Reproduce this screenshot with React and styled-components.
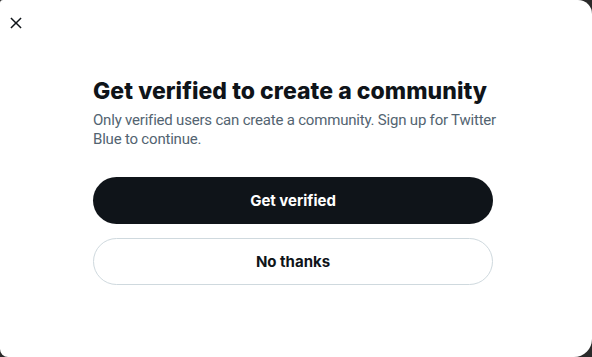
import React from "react";
import styled, { createGlobalStyle } from "styled-components";

const Global = createGlobalStyle`
  html, body { margin: 0; padding: 0; background: #2a2a2a; }
  body { width: 592px; height: 357px; overflow: hidden; font-family: Inter, "Noto Sans", sans-serif; }
`;

const Modal = styled.div`
  box-sizing: border-box;
  width: 592px;
  height: 357px;
  background: #ffffff;
  border-radius: 3px 14px 18px 8px;
  display: flex;
  flex-direction: column;
`;

const TopBar = styled.div`
  height: 46px;
  display: flex;
  align-items: center;
  padding-left: 6px;
`;

const CloseButton = styled.button`
  width: 20px;
  height: 20px;
  padding: 0;
  border: none;
  background: transparent;
  display: flex;
  align-items: center;
  justify-content: center;
  color: #0f1419;
  cursor: pointer;
`;

const Body = styled.div`
  padding: 31px 0 0 93px;
  width: 400px;
  display: flex;
  flex-direction: column;
`;

const Title = styled.h1`
  margin: 0;
  font-size: 23px;
  line-height: 28px;
  font-weight: 800;
  color: #0f1419;
  letter-spacing: 0.05px;
  white-space: nowrap;
`;

const Sub = styled.p`
  margin: 6px 0 0;
  font-family: Roboto, "Noto Sans", sans-serif;
  font-size: 15px;
  line-height: 19px;
  letter-spacing: -0.2px;
  color: #536471;
  width: 420px;
`;

const Buttons = styled.div`
  display: flex;
  flex-direction: column;
  gap: 14px;
  margin-top: 28px;
`;

const Btn = styled.button`
  box-sizing: border-box;
  width: 400px;
  height: 47px;
  border-radius: 9999px;
  font-family: inherit;
  font-size: 15px;
  font-weight: 700;
  cursor: pointer;
  background: ${(p) => (p.$primary ? "#0f1419" : "#ffffff")};
  color: ${(p) => (p.$primary ? "#ffffff" : "#0f1419")};
  border: ${(p) => (p.$primary ? "none" : "1px solid #cfd9de")};
`;

export default function App() {
  return (
    <>
      <Global />
      <Modal>
        <TopBar>
          <CloseButton aria-label="Close">
            <svg width="18" height="18" viewBox="0 0 24 24" fill="currentColor">
              <path d="M10.59 12L4.54 5.96l1.42-1.42L12 10.59l6.04-6.05 1.42 1.42L13.41 12l6.05 6.04-1.42 1.42L12 13.41l-6.04 6.05-1.42-1.42L10.59 12z" />
            </svg>
          </CloseButton>
        </TopBar>
        <Body>
          <Title>Get verified to create a community</Title>
          <Sub>Only verified users can create a community. Sign up for Twitter Blue to continue.</Sub>
          <Buttons>
            <Btn $primary>Get verified</Btn>
            <Btn>No thanks</Btn>
          </Buttons>
        </Body>
      </Modal>
    </>
  );
}
